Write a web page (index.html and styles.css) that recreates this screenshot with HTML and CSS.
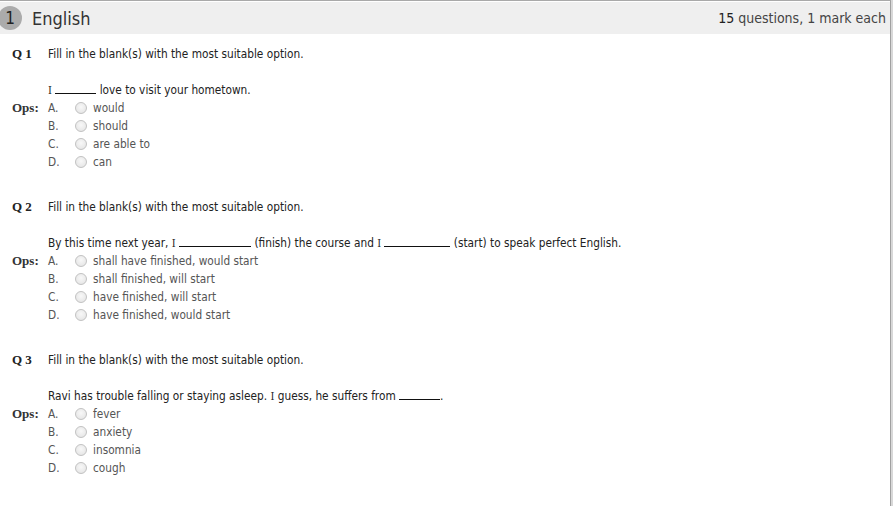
FILE: index.html
```html
<!DOCTYPE html>
<html>
<head>
<meta charset="utf-8">
<link rel="stylesheet" href="styles.css">
</head>
<body>
<div class="frame">
  <div class="section-head">
    <div class="title"><span class="num">1</span><span class="name">English</span></div>
    <div class="meta"><span class="count">15</span> questions, 1 mark each</div>
  </div>

  <div class="question">
    <div class="row qhead"><span class="lbl">Q 1</span><span class="txt">Fill in the blank(s) with the most suitable option.</span></div>
    <div class="row qtext"><span class="lbl"></span><span class="txt"><span class="cap">I</span> <span class="blank b1"></span> love to visit your hometown.</span></div>
    <div class="row opt"><span class="lbl">Ops:</span><span class="letter">A.</span><span class="radio"></span><span class="otxt">would</span></div>
    <div class="row opt"><span class="lbl"></span><span class="letter">B.</span><span class="radio"></span><span class="otxt">should</span></div>
    <div class="row opt"><span class="lbl"></span><span class="letter">C.</span><span class="radio"></span><span class="otxt">are able to</span></div>
    <div class="row opt"><span class="lbl"></span><span class="letter">D.</span><span class="radio"></span><span class="otxt">can</span></div>
  </div>

  <div class="question">
    <div class="row qhead"><span class="lbl">Q 2</span><span class="txt">Fill in the blank(s) with the most suitable option.</span></div>
    <div class="row qtext"><span class="lbl"></span><span class="txt">By this time next year, <span class="cap">I</span> <span class="blank b2"></span> (finish) the course and <span class="cap">I</span> <span class="blank b3"></span> (start) to speak perfect English.</span></div>
    <div class="row opt"><span class="lbl">Ops:</span><span class="letter">A.</span><span class="radio"></span><span class="otxt">shall have finished, would start</span></div>
    <div class="row opt"><span class="lbl"></span><span class="letter">B.</span><span class="radio"></span><span class="otxt">shall finished, will start</span></div>
    <div class="row opt"><span class="lbl"></span><span class="letter">C.</span><span class="radio"></span><span class="otxt">have finished, will start</span></div>
    <div class="row opt"><span class="lbl"></span><span class="letter">D.</span><span class="radio"></span><span class="otxt">have finished, would start</span></div>
  </div>

  <div class="question">
    <div class="row qhead"><span class="lbl">Q 3</span><span class="txt">Fill in the blank(s) with the most suitable option.</span></div>
    <div class="row qtext"><span class="lbl"></span><span class="txt">Ravi has trouble falling or staying asleep. <span class="cap">I</span> guess, he suffers from <span class="blank b1"></span>.</span></div>
    <div class="row opt"><span class="lbl">Ops:</span><span class="letter">A.</span><span class="radio"></span><span class="otxt">fever</span></div>
    <div class="row opt"><span class="lbl"></span><span class="letter">B.</span><span class="radio"></span><span class="otxt">anxiety</span></div>
    <div class="row opt"><span class="lbl"></span><span class="letter">C.</span><span class="radio"></span><span class="otxt">insomnia</span></div>
    <div class="row opt"><span class="lbl"></span><span class="letter">D.</span><span class="radio"></span><span class="otxt">cough</span></div>
  </div>
</div>
</body>
</html>
```
FILE: styles.css
```css
html, body {
  margin: 0;
  padding: 0;
  background: #ffffff;
}
body {
  font-family: "DejaVu Sans Condensed", "DejaVu Sans", sans-serif;
  font-size: 11.75px;
  color: #222;
}
.frame {
  width: 891px;
  height: 506px;
  border-top: 1px solid #a9a9a9;
  border-right: 1px solid #a0a0a0;
  box-shadow: 2px 0 0 #d8d8d8;
  padding-top: 1px;
  box-sizing: border-box;
}
.section-head {
  background: #efefef;
  height: 32px;
  display: flex;
  align-items: center;
  justify-content: space-between;
  padding-right: 4px;
}
.title {
  display: flex;
  align-items: center;
}
.num {
  width: 24px;
  height: 24px;
  border-radius: 50%;
  background: #ababab;
  color: #222;
  font-size: 17px;
  display: flex;
  align-items: center;
  justify-content: center;
  margin-left: -2px;
}
.name {
  font-size: 18px;
  color: #333;
  margin-left: 10px;
}
.meta {
  font-size: 14px;
  color: #444;
}
.count {
  color: #222;
}
.question {
  padding-left: 12px;
  padding-top: 11px;
  padding-bottom: 16px;
}
.row {
  display: flex;
  align-items: center;
  height: 18px;
}
.qhead {
  margin-bottom: 18px;
}
.lbl {
  width: 36px;
  flex: none;
  font-family: "Liberation Serif", serif;
  font-weight: bold;
  font-size: 13px;
  color: #222;
}
.opt .lbl {
  color: #333;
}
.txt {
  color: #222;
}
.cap {
  font-family: "DejaVu Serif Condensed", "DejaVu Serif", serif;
  font-size: 11px;
}
.blank {
  display: inline-block;
  border-bottom: 1px solid #111;
  height: 10px;
  vertical-align: baseline;
}
.b1 { width: 41px; }
.b2 { width: 72px; }
.b3 { width: 66px; }
.letter {
  width: 26px;
  flex: none;
  color: #555;
}
.radio {
  width: 10px;
  height: 10px;
  border-radius: 50%;
  border: 1px solid #c2c2c2;
  background: radial-gradient(circle at 50% 40%, #f8f8f8 0%, #e8e8e8 70%, #dadada 100%);
  flex: none;
  margin: 0 6px 0 1px;
}
.otxt {
  color: #555;
}
```
